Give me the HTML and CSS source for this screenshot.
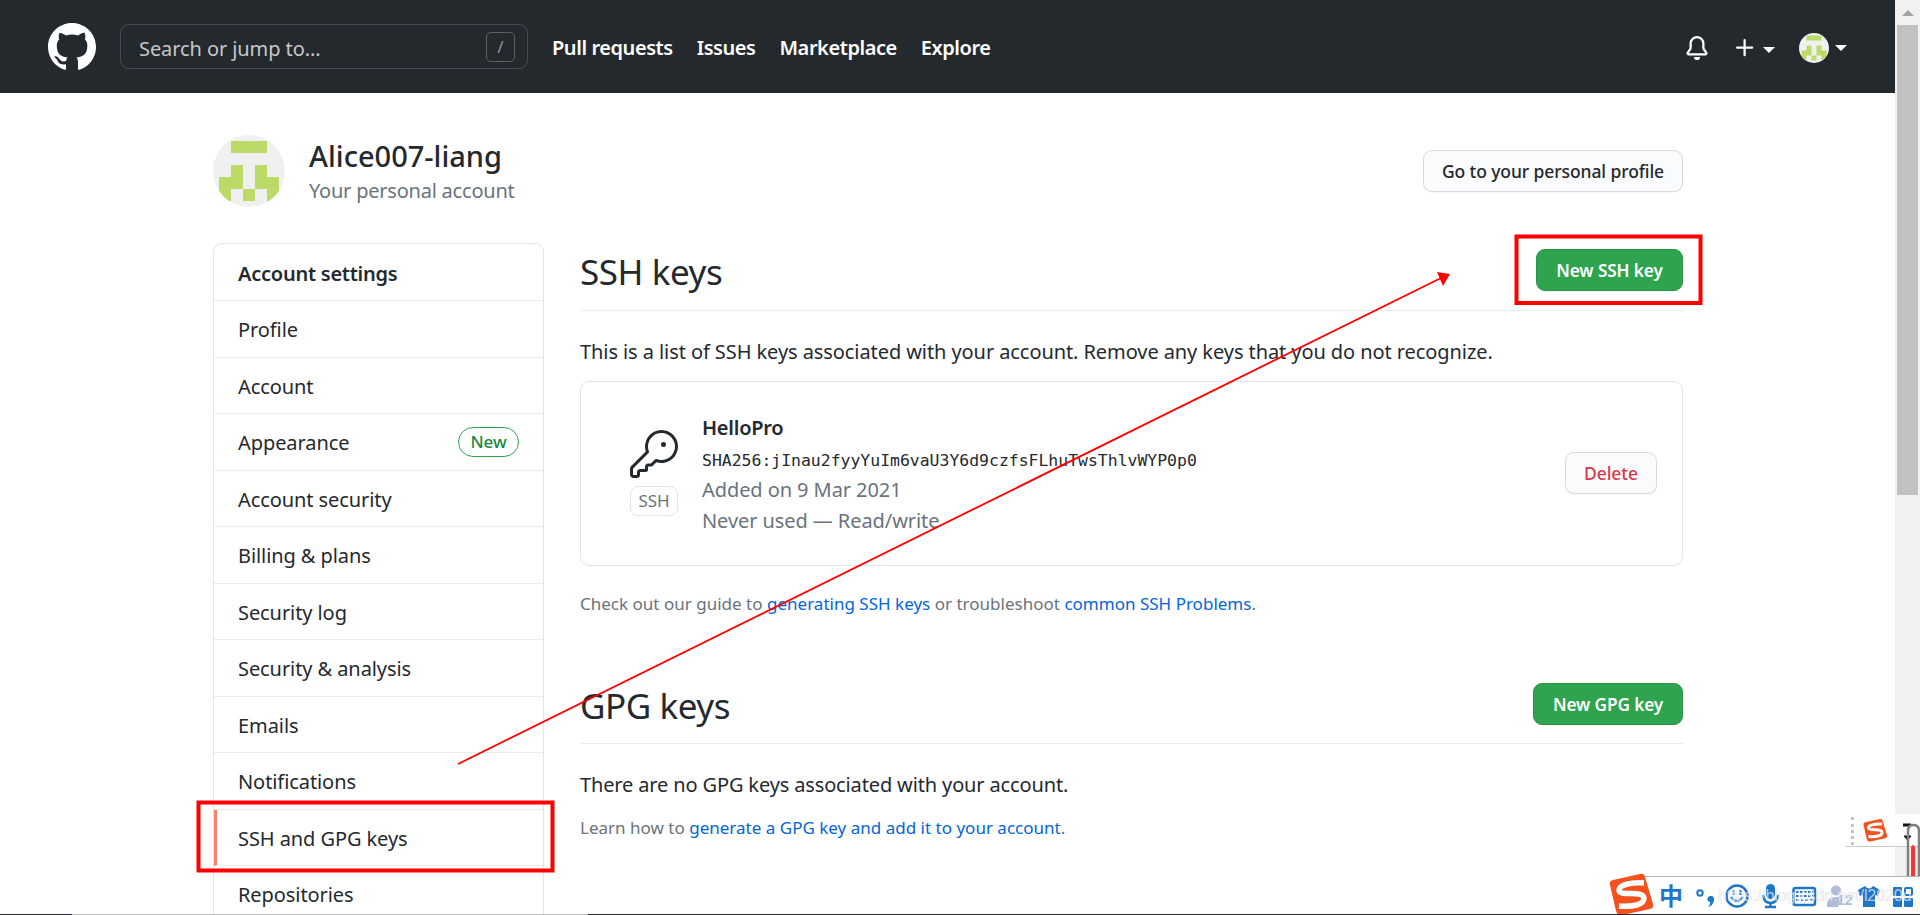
FILE: index.html
```html
<!DOCTYPE html>
<html lang="en">
<head>
    <meta charset="UTF-8">
    <title>SSH and GPG keys</title>
    <link rel="stylesheet" href="styles.css">
</head>
<body>
<svg width="0" height="0" class="defs">
    <symbol id="avatar" viewBox="0 0 6 6">
        <rect width="6" height="6" fill="#f0f0f0"/>
        <path fill="#bbdb66" d="M1.5.5h3v1h-3zM1.5 2.5h1v2h-1zM3.5 2.5h1v2h-1zM.5 3.5h1v2h-1zM4.5 3.5h1v2h-1zM2.5 4.5h1v1h-1z"/>
    </symbol>
    <symbol id="sogou" viewBox="0 0 44 42">
        <path fill="#f4511e" d="M4 7 31 1q4-1 5 3l8 27q1 4-3 5L13 42q-5 1-6-4L1 12q-1-4 3-5z"/>
        <path fill="none" stroke="#fff" stroke-width="5.5" d="M35 10C22 9 10 12 10 17c0 7 24 0 25 8 0 7-11 9-25 8"/>
    </symbol>
</svg>
<div id="page">
    <div id="header">
        <svg class="logo" viewBox="0 0 16 16"><path fill="#fff" fill-rule="evenodd" d="M8 0C3.58 0 0 3.58 0 8c0 3.54 2.29 6.53 5.47 7.59.4.07.55-.17.55-.38 0-.19-.01-.82-.01-1.49-2.01.37-2.53-.49-2.69-.94-.09-.23-.48-.94-.82-1.13-.28-.15-.68-.52-.01-.53.63-.01 1.08.58 1.23.82.72 1.21 1.87.87 2.33.66.07-.52.28-.87.51-1.07-1.78-.2-3.64-.89-3.64-3.95 0-.87.31-1.59.82-2.15-.08-.2-.36-1.02.08-2.12 0 0 .67-.21 2.2.82.64-.18 1.32-.27 2-.27s1.36.09 2 .27c1.53-1.04 2.2-.82 2.2-.82.44 1.1.16 1.92.08 2.12.51.56.82 1.27.82 2.15 0 3.07-1.87 3.75-3.65 3.95.29.25.54.73.54 1.48 0 1.07-.01 1.93-.01 2.2 0 .21.15.46.55.38A8.01 8.01 0 0016 8c0-4.42-3.58-8-8-8z"/></svg>
        <div class="search"><span>Search or jump to...</span><i class="slash">/</i></div>
        <ul class="nav">
            <li>Pull requests</li>
            <li>Issues</li>
            <li>Marketplace</li>
            <li>Explore</li>
        </ul>
        <div class="tools">
            <svg class="bell" viewBox="0 0 16 16"><path fill="#fff" fill-rule="evenodd" d="M8 16a2 2 0 001.985-1.75c.017-.137-.097-.25-.235-.25h-3.5c-.138 0-.252.113-.235.25A2 2 0 008 16zM8 1.5A3.5 3.5 0 004.5 5v2.947c0 .346-.102.683-.294.97l-1.703 2.556a.018.018 0 00-.003.01l.001.006.01.01.007.001h10.964l.007-.001.01-.01.001-.007a.017.017 0 00-.003-.01l-1.703-2.554a1.75 1.75 0 01-.294-.97V5A3.5 3.5 0 008 1.5zM3 5a5 5 0 0110 0v2.947c0 .05.015.098.042.139l1.703 2.555A1.518 1.518 0 0113.482 13H2.518a1.518 1.518 0 01-1.263-2.36l1.703-2.554A.25.25 0 003 7.947V5z"/></svg>
            <svg class="plus" viewBox="0 0 16 16"><path fill="#fff" d="M7.75 2a.75.75 0 01.75.75V7h4.25a.75.75 0 110 1.5H8.5v4.25a.75.75 0 11-1.5 0V8.5H2.75a.75.75 0 010-1.5H7V2.75A.75.75 0 017.75 2z"/></svg>
            <i class="caret low"></i>
            <svg class="face"><use href="#avatar"/></svg>
            <i class="caret"></i>
        </div>
    </div>
    <div id="profile">
        <svg class="photo"><use href="#avatar"/></svg>
        <div class="who">
            <h2>Alice007-liang</h2>
            <p>Your personal account</p>
        </div>
        <button class="btn go">Go to your personal profile</button>
    </div>
    <div id="content">
        <ul id="menu">
            <li class="head"><span>Account settings</span></li>
            <li><span>Profile</span></li>
            <li><span>Account</span></li>
            <li><span>Appearance</span><b class="new">New</b></li>
            <li><span>Account security</span></li>
            <li><span>Billing &amp; plans</span></li>
            <li><span>Security log</span></li>
            <li><span>Security &amp; analysis</span></li>
            <li><span>Emails</span></li>
            <li><span>Notifications</span></li>
            <li class="current"><span>SSH and GPG keys</span></li>
            <li><span>Repositories</span></li>
        </ul>
        <div id="main">
            <div class="title">
                <h1>SSH keys</h1>
                <button class="btn green ssh">New SSH key</button>
            </div>
            <p class="intro">This is a list of SSH keys associated with your account. Remove any keys that you do not recognize.</p>
            <div class="card">
                <div class="kind">
                    <svg class="key" viewBox="0 0 24 24"><path fill="#24292e" fill-rule="evenodd" d="M16.75 8.5a1.25 1.25 0 100-2.5 1.25 1.25 0 000 2.5zM15.75 0a8.25 8.25 0 00-7.851 10.79L.513 18.178A1.75 1.75 0 000 19.414v2.836C0 23.217.784 24 1.75 24h1.5A1.75 1.75 0 005 22.25v-1a.25.25 0 01.25-.25h2.735a.75.75 0 00.545-.22l.214-.213A.875.875 0 009 19.948V18.5a.25.25 0 01.25-.25h1.086c.464 0 .91-.184 1.237-.513l1.636-1.636A8.25 8.25 0 1015.75 0zM9 8.25a6.75 6.75 0 114.288 6.287.75.75 0 00-.804.168l-1.971 1.972a.25.25 0 01-.177.073H9.25A1.75 1.75 0 007.5 18.5v1H5.25a1.75 1.75 0 00-1.75 1.75v1a.25.25 0 01-.25.25h-1.5a.25.25 0 01-.25-.25v-2.836a.25.25 0 01.073-.177l7.722-7.721a.75.75 0 00.168-.804A6.73 6.73 0 019 8.25z"/></svg>
                    <span class="tag">SSH</span>
                </div>
                <div class="info">
                    <strong>HelloPro</strong>
                    <code>SHA256:jInau2fyyYuIm6vaU3Y6d9czfsFLhuTwsThlvWYP0p0</code>
                    <span>Added on 9 Mar 2021</span>
                    <span>Never used — Read/write</span>
                </div>
                <button class="btn delete">Delete</button>
            </div>
            <p class="help">Check out our guide to <a>generating SSH keys</a> or troubleshoot <a>common SSH Problems</a>.</p>
            <div class="title gpg">
                <h1>GPG keys</h1>
                <button class="btn green">New GPG key</button>
            </div>
            <p class="intro none">There are no GPG keys associated with your account.</p>
            <p class="help learn">Learn how to <a>generate a GPG key and add it to your account</a>.</p>
        </div>
    </div>
</div>
<div id="scroll"><i class="up"></i><i class="thumb"></i></div>

<!-- marks over the page -->
<svg id="marks" viewBox="0 0 1920 915">
    <g fill="none" stroke="#f00">
        <rect x="1516.500" y="236.500" width="184" height="66.500" stroke-width="4"/>
        <rect x="198.500" y="802.500" width="354" height="68" stroke-width="4"/>
        <path d="M458 764 1441 278" stroke-width="1.800"/>
    </g>
    <path fill="#f00" d="M1450 274l-13-2 6 14z"/>
</svg>

<!-- input method bars -->
<div id="mini">
    <i class="dots"></i>
    <svg class="s"><use href="#sogou"/></svg>
</div>
<svg id="gauge" viewBox="0 0 18 55">
    <path d="M1 3h8" stroke="#111" stroke-width="3"/>
    <path d="M2 14h7l-3.500 4z" fill="#111" stroke="#111"/>
    <path d="M6 55V9q0-6 5.500-6T17 9v46" fill="none" stroke="#808080" stroke-width="2.500"/>
    <path d="M9 55V25q2-4 4 0v30z" fill="#f33"/>
</svg>
<div id="ime">
    <svg viewBox="0 0 280 37" fill="none" stroke="#1e76c8" stroke-width="2.500">
        <circle cx="60" cy="16" r="2.700" stroke-width="2"/>
        <path d="M71 19a3 3 0 0 1 3 4q-1 6-6 7 3-3 2-5a3 3 0 0 1 1-6z" fill="#1e76c8" stroke="none"/>
        <circle cx="97" cy="19" r="10.500"/><path d="M93.500 13v5M100.500 13v5M91 20q6 8 12 0" stroke-width="2"/>
        <rect x="126" y="7" width="9" height="15" rx="4.500" fill="#1e76c8" stroke="none"/>
        <path d="M123 18q1 8 7.500 8t7.500-8M130.500 26v4M125 30h11"/>
        <rect x="153.500" y="11" width="21.500" height="17" rx="2"/>
        <path d="M156 15h17M156 19h17M156 23h3M161 23h7M170 23h3" stroke-dasharray="2.500 1.500" stroke-width="2"/>
        <g fill="#aebcd6" stroke="none"><circle cx="196" cy="13.500" r="5"/><path d="M187 30q-1-10 9-10 5 0 6 3l-4 7z"/></g>
        <path fill="#1e76c8" stroke="none" d="M225 9q4 5 8 0l7 4-2 6-3-1v12h-12V18l-3 1-2-6z"/>
        <rect x="253" y="10" width="9" height="9" rx="1" fill="#1e76c8" stroke="none"/>
        <rect x="253" y="21" width="9" height="9" rx="1" fill="#1e76c8" stroke="none"/>
        <rect x="264" y="21" width="9" height="9" rx="1" fill="#1e76c8" stroke="none"/>
        <rect x="265" y="11" width="7" height="7" rx="1" stroke-width="2"/>
    </svg>
    <span class="zhong">中</span>
    <span class="twelve">12</span>
    <span class="url">https://blog.csdn.net/l2020d</span>
</div>
<svg id="big"><use href="#sogou"/></svg>
<div id="edge"></div>
</body>
</html>
```
FILE: styles.css
```css
*{
    margin:0;
    padding:0;
    box-sizing:border-box;
    list-style-type:none;
}
body{
    width:1920px;
    height:915px;
    overflow:hidden;
    position:relative;
    display:flex;
    background:#fff;
    color:#24292e;
    font-family:"Noto Sans","Open Sans",sans-serif;
    font-size:20px;
    letter-spacing:-.08px;
}
svg{
    display:block;
    flex:none;
}
.defs{
    position:absolute;
}
#page{
    width:1895px;
    height:915px;
    overflow:hidden;
}
#header{
    height:93px;
    background:#24292e;
    display:flex;
    align-items:center;
    padding:0 48px;
    color:#fff;
}
.logo{
    width:48px;
    height:48px;
    margin-right:24px;
}
.search{
    width:408px;
    height:45px;
    border:1px solid #444d56;
    border-radius:9px;
    padding:0 12px 0 18px;
    display:flex;
    align-items:center;
    justify-content:space-between;
    color:#c6c8ca;
}
.search span{
    padding-top:3px;
}
.slash{
    width:29px;
    height:30px;
    border:1px solid #5b6168;
    border-radius:5px;
    font-size:16px;
    font-style:normal;
    line-height:28px;
    text-align:center;
    color:#959da5;
}
.nav{
    display:flex;
    gap:24px;
    margin-left:24px;
    padding-top:2px;
    font-weight:600;
    letter-spacing:-.44px;
    white-space:nowrap;
}
.tools{
    margin-left:auto;
    display:flex;
    align-items:center;
    padding-top:2px;
}
.bell{
    width:24px;
    height:24px;
    margin-right:24px;
}
.plus{
    width:24px;
    height:24px;
    margin-right:6px;
}
.caret{
    border:6px solid transparent;
    border-top-color:#fff;
    border-bottom:0;
}
.low{
    margin:4px 24px 0 0;
}
.face{
    width:30px;
    height:30px;
    border-radius:50%;
    margin-right:6px;
}
#profile{
    display:flex;
    margin:42px 212px 0 213px;
    height:72px;
}
.photo{
    width:72px;
    height:72px;
    border-radius:50%;
}
.who{
    margin-left:24px;
    padding-top:1px;
}
.who h2{
    font-size:29px;
    line-height:40px;
    font-weight:500;
    letter-spacing:0;
}
.who p{
    line-height:30px;
    letter-spacing:-.22px;
    color:#6a737d;
}
.btn{
    height:42px;
    border:1px solid #d9dbde;
    border-radius:9px;
    background:#fafbfc;
    color:#24292e;
    font-family:inherit;
    font-size:17.5px;
    font-weight:500;
    letter-spacing:-.1px;
    white-space:nowrap;
    box-shadow:0 1px 0 rgba(27,31,35,.04);
}
.go{
    width:260px;
    margin:15px 0 0 auto;
}
#content{
    display:flex;
    margin:36px 212px 0 213px;
}
#menu{
    width:331px;
    border:1px solid #e1e4e8;
    border-radius:9px;
    margin-right:36px;
}
#menu li{
    height:56.5px;
    border-bottom:1px solid #eaecef;
    display:flex;
    align-items:center;
    justify-content:space-between;
    padding:2px 24px 0;
}
#menu .head{
    height:57px;
    font-weight:600;
    letter-spacing:-.24px;
}
#menu .current{
    border-left:3px solid #f9826c;
    padding-left:21px;
}
#menu .new{
    width:61px;
    height:30px;
    margin-top:-2px;
    border:1px solid #2ea44f;
    border-radius:15px;
    color:#22863a;
    font-size:17px;
    font-weight:500;
    line-height:28px;
    text-align:center;
}
#main{
    width:1103px;
}
.title{
    height:68px;
    border-bottom:1px solid #eaecef;
    display:flex;
    justify-content:space-between;
    padding-top:6px;
}
.title h1{
    font-size:35px;
    line-height:45px;
    font-weight:400;
    letter-spacing:-.45px;
}
.green{
    width:150px;
    background:#2ea44f;
    border-color:#2b9449;
    color:#fff;
    font-size:17.2px;
    font-weight:600;
}
.ssh{
    width:147px;
}
.intro{
    margin-top:25px;
    line-height:32px;
    white-space:nowrap;
}
.none{
    letter-spacing:-.14px;
}
.card{
    height:185px;
    margin-top:13px;
    border:1px solid #e1e4e8;
    border-radius:9px;
    display:flex;
    align-items:center;
    padding:0 25px 2px 49px;
}
.tag{
    display:block;
    width:48px;
    height:30px;
    margin-top:8px;
    border:1px solid #e1e4e8;
    border-radius:8px;
    font-size:17px;
    line-height:28px;
    text-align:center;
    color:#6a737d;
}
.key{
    width:48px;
    height:48px;
}
.info{
    display:flex;
    flex-direction:column;
    margin-left:24px;
    padding-top:2px;
    line-height:31px;
    color:#6a737d;
}
.info strong{
    font-weight:600;
    letter-spacing:-.25px;
    color:#24292e;
}
.info code{
    padding-top:5px;
    font-family:"DejaVu Sans Mono","Liberation Mono",monospace;
    font-size:16.45px;
    line-height:26px;
    letter-spacing:0;
    color:#24292e;
}
.delete{
    width:92px;
    margin-left:auto;
    color:#d73a49;
}
.help{
    margin-top:24px;
    font-size:17px;
    line-height:27px;
    letter-spacing:.01px;
    color:#6a737d;
    white-space:nowrap;
}
.help a{
    color:#0366d6;
}
.gpg{
    height:67px;
    margin-top:60px;
}
.learn{
    margin-top:13px;
}
#scroll{
    width:25px;
    background:#f1f1f1;
    display:flex;
    flex-direction:column;
    align-items:center;
}
.up{
    border:6px solid transparent;
    border-bottom-color:#a3a3a3;
    border-top:0;
    margin:10px 0 9px;
}
.thumb{
    width:21px;
    height:470px;
    background:#c1c1c1;
}
#marks{
    position:absolute;
    left:0;
    top:0;
    width:1920px;
    height:915px;
}
#mini{
    position:absolute;
    left:1845px;
    top:814px;
    width:75px;
    height:33px;
    background:#fff;
    border-bottom:1px solid #ccc;
    display:flex;
    padding:3px 6px;
}
.dots{
    height:28px;
    border-left:3px dotted #c4c4c4;
}
.s{
    width:24px;
    height:24px;
    margin:1px 0 0 9px;
}
.s use{
    transform:scale(.55);
}
#gauge{
    position:absolute;
    left:1902px;
    top:822px;
    width:18px;
    height:55px;
}
#ime{
    position:absolute;
    left:1640px;
    top:876px;
    width:280px;
    height:38px;
    background:#fff;
    border-top:1px solid #b0b2c0;
}
.s use{
    transform:none;
}
#ime svg{
    width:280px;
    height:37px;
}
.zhong{
    position:absolute;
    left:19px;
    top:6px;
    font:bold 24px/24px "Noto Sans CJK SC",sans-serif;
    color:#1e76c8;
}
.twelve{
    position:absolute;
    left:197px;
    top:14px;
    font:bold 14px/18px "Liberation Sans",sans-serif;
    color:#aebcd6;
    text-shadow:0 0 1px #fff;
}
.url{
    position:absolute;
    left:78px;
    top:8px;
    font:16px/22px "Liberation Sans",sans-serif;
    color:rgba(255,255,255,.65);
    text-shadow:0 0 1px rgba(120,120,120,.35);
}
#big{
    position:absolute;
    left:1609px;
    top:873px;
    width:44px;
    height:42px;
}
#edge{
    position:absolute;
    left:0;
    right:0;
    bottom:0;
    height:1px;
    background:linear-gradient(90deg,#2a2a38 72px,#bbb 72px,#bbb 588px,#2a2a38 588px);
}
```
